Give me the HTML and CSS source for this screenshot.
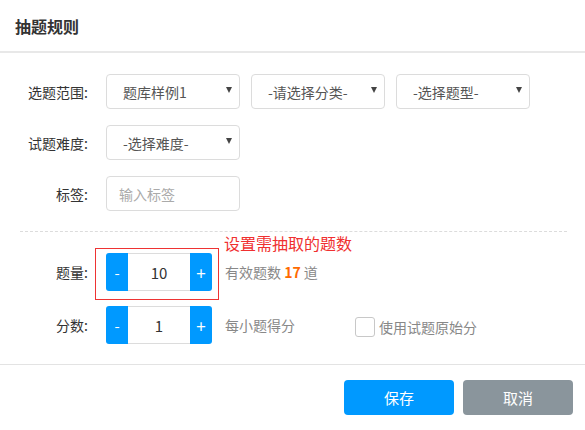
FILE: index.html
```html
<!DOCTYPE html>
<html lang="zh">
<head>
<meta charset="utf-8">
<link rel="stylesheet" href="styles.css">
</head>
<body>
<div class="dialog">
  <header class="hd"><h1 class="title">抽题规则</h1></header>
  <div class="bd">
    <div class="row">
      <label class="lbl">选题范围:</label>
      <div class="select"><span class="val">题库样例1</span><i class="arrow"></i></div>
      <div class="select"><span class="val">-请选择分类-</span><i class="arrow"></i></div>
      <div class="select"><span class="val">-选择题型-</span><i class="arrow"></i></div>
    </div>
    <div class="row">
      <label class="lbl">试题难度:</label>
      <div class="select"><span class="val">-选择难度-</span><i class="arrow"></i></div>
    </div>
    <div class="row">
      <label class="lbl">标签:</label>
      <div class="input"><span class="ph">输入标签</span></div>
    </div>
    <div class="sep"></div>
    <div class="row row-spin first">
      <label class="lbl">题量:</label>
      <div class="spin-wrap">
        <div class="spinner">
          <span class="sbtn minus">-</span>
          <span class="sval">10</span>
          <span class="sbtn plus">+</span>
        </div>
        <div class="mark"></div>
        <div class="note">设置需抽取的题数</div>
      </div>
      <span class="hint">有效题数 <b class="num">17</b> 道</span>
    </div>
    <div class="row row-spin last">
      <label class="lbl">分数:</label>
      <div class="spinner">
        <span class="sbtn minus">-</span>
        <span class="sval">1</span>
        <span class="sbtn plus">+</span>
      </div>
      <span class="hint">每小题得分</span>
      <label class="check"><span class="box"></span><span class="ctext">使用试题原始分</span></label>
    </div>
  </div>
  <footer class="ft">
    <button class="btn save">保存</button>
    <button class="btn cancel">取消</button>
  </footer>
</div>
</body>
</html>
```
FILE: styles.css
```css
* { box-sizing: border-box; }
html, body { margin: 0; padding: 0; background: #fff; }
body {
  font-family: "Noto Sans CJK SC", "Liberation Sans", sans-serif;
  font-size: 14px;
  color: #333;
  width: 585px;
  height: 430px;
  overflow: hidden;
}
.hd {
  height: 53px;
  border-bottom: 2px solid #e8e8e8;
  display: flex;
  align-items: center;
  padding-left: 15px;
}
.title {
  margin: 0;
  font-size: 16px;
  font-weight: bold;
  color: #333;
  line-height: 1;
  margin-top: 0;
}
.bd {
  padding-top: 21px;
  padding-bottom: 20px;
  border-bottom: 1px solid #e3e3e3;
}
.row {
  display: flex;
  align-items: center;
  height: 35px;
  margin-bottom: 16px;
}
.lbl {
  width: 88px;
  text-align: right;
  margin-right: 18px;
  color: #333;
  font-size: 14px;
}
.select {
  width: 134px;
  height: 35px;
  border: 1px solid #dcdcdc;
  border-radius: 4px;
  display: flex;
  align-items: center;
  padding-left: 16px;
  padding-right: 7px;
  margin-right: 11px;
  color: #555;
  font-size: 14px;
}
.val { flex: 1; }
.arrow {
  width: 0;
  height: 0;
  border-left: 3.5px solid transparent;
  border-right: 3.5px solid transparent;
  border-top: 6px solid #444;
  margin-top: -3px;
}
.input {
  width: 134px;
  height: 35px;
  border: 1px solid #dcdcdc;
  border-radius: 4px;
  display: flex;
  align-items: center;
  padding-left: 12px;
}
.ph { color: #aaa; }
.sep {
  margin: 20px 18px 0 20px;
  border-top: 1px dashed #dcdcdc;
}
.row-spin { height: 38px; margin-bottom: 15px; }
.row-spin.first { margin-top: 21px; }
.row-spin.last { margin-bottom: 0; }
.spin-wrap { position: relative; }
.spinner {
  display: flex;
  width: 106px;
  height: 38px;
}
.sbtn {
  width: 22px;
  background: #0099ff;
  color: #fff;
  display: flex;
  align-items: center;
  justify-content: center;
  font-size: 15px;
}
.minus { border-radius: 3px 0 0 3px; }
.plus { border-radius: 0 3px 3px 0; font-size: 17px; }
.sval {
  flex: 1;
  border-top: 1px solid #dcdcdc;
  border-bottom: 1px solid #dcdcdc;
  display: flex;
  align-items: center;
  justify-content: center;
  font-size: 15px;
  color: #333;
}
.mark {
  position: absolute;
  left: -11px;
  top: -5px;
  width: 124px;
  height: 52px;
  border: 1px solid #ee3333;
}
.note {
  position: absolute;
  left: 118px;
  top: -20px;
  white-space: nowrap;
  color: #f03030;
  font-size: 16px;
  line-height: 20px;
}
.hint {
  margin-left: 13px;
  color: #888;
  font-size: 14px;
}
.num { color: #ff6a00; font-weight: bold; }
.check {
  display: flex;
  align-items: center;
  margin-left: 60px;
  margin-top: 4px;
}
.box {
  width: 20px;
  height: 20px;
  border: 1px solid #c8c8c8;
  border-radius: 3px;
  margin-right: 4px;
}
.ctext { color: #888; font-size: 14px; }
.ft {
  display: flex;
  justify-content: flex-end;
  padding: 15px 12px 0 0;
  gap: 9px;
}
.btn {
  width: 110px;
  height: 35px;
  border: 0;
  border-radius: 4px;
  color: #fff;
  font-family: "Noto Sans CJK SC", "Liberation Sans", sans-serif;
  font-size: 15px;
}
.save { background: #0099ff; }
.cancel { background: #8a959c; }
```
